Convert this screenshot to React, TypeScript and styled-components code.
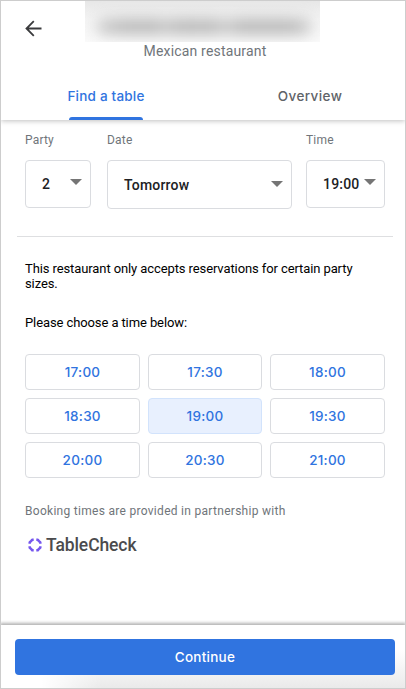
import React, { useState } from "react";
import styled, { createGlobalStyle } from "styled-components";

const GlobalStyle = createGlobalStyle`
  *, *::before, *::after { box-sizing: border-box; }
  body { margin: 0; background: #fff; font-family: Roboto, sans-serif; }
  button { font: inherit; padding: 0; cursor: pointer; }
`;

const Screen = styled.main`
  display: flex;
  flex-direction: column;
  width: 406px;
  height: 689px;
  border: 1px solid #cdcdcd;
  background: #fff;
  overflow: hidden;
`;

const Header = styled.header`
  position: relative;
  height: 119px;
  flex: none;
  display: flex;
  flex-direction: column;
  background: #fff;
  box-shadow: 0 1px 5px rgba(0, 0, 0, 0.25);
`;

const TitleRow = styled.div`
  display: flex;
  height: 40px;
`;

const BackButton = styled.button`
  display: flex;
  width: 84px;
  height: 40px;
  padding: 19px 0 0 24px;
  border: 0;
  background: none;
`;

const RedactedName = styled.div`
  width: 235px;
  height: 41px;
  overflow: hidden;
  background: linear-gradient(#e7e7e7, #f4f4f4 45%, #fafafa);
`;

const Smudge = styled.div`
  width: 216px;
  height: 17px;
  margin: 17px 0 0 11px;
  border-radius: 7px;
  background: linear-gradient(90deg, #d4d4d4, #bebebe 12%, #bcbcbc 27%, #cacaca 32%, #bcbcbc 38%, #bdbdbd 54%, #cecece 60%, #bcbcbc 67%, #bcbcbc 90%, #d4d4d4);
  filter: blur(7px);
`;

const Category = styled.div`
  height: 20px;
  padding-left: 4px;
  text-align: center;
  font-size: 14px;
  line-height: 20px;
  letter-spacing: 0.18px;
  color: #70757a;
`;

const Tabs = styled.nav`
  display: grid;
  grid-template-columns: 210px 198px;
  flex: 1;
`;

const Tab = styled.button<{ $active?: boolean }>`
  display: flex;
  flex-direction: column;
  align-items: center;
  justify-content: flex-end;
  border: 0;
  background: none;
  font-family: Inter, sans-serif;
  font-size: 13.5px;
  font-weight: 500;
  line-height: 18px;
  letter-spacing: ${(p) => (p.$active ? "0.2px" : "0.4px")};
  color: ${(p) => (p.$active ? "#3074e0" : "#5f6368")};

  &::after {
    content: "";
    width: 74px;
    height: 3px;
    margin-top: 12px;
    border-radius: 3px 3px 0 0;
    background: ${(p) => (p.$active ? "#3074e0" : "transparent")};
  }
`;

const Content = styled.section`
  flex: 1;
  padding: 11px 20px 0 24px;
`;

const Fields = styled.div`
  display: grid;
  grid-template-columns: 82px 199px 79px;
  width: 360px;
`;

const Field = styled.div`
  display: flex;
  flex-direction: column;
`;

const Label = styled.span`
  height: 18px;
  margin-bottom: 11px;
  font-size: 12px;
  line-height: 18px;
  letter-spacing: 0.2px;
  color: #70757a;
`;

const Select = styled.button<{ $width: number; $tall?: boolean }>`
  display: flex;
  align-items: center;
  justify-content: space-between;
  width: ${(p) => p.$width}px;
  height: ${(p) => (p.$tall ? 49 : 48)}px;
  padding: 0 8px 0 16px;
  border: 1px solid #dadce0;
  border-radius: 4px;
  background: #fff;
  font-size: 14px;
  font-weight: 500;
  letter-spacing: 0.2px;
  color: #202124;

  svg { margin-top: ${(p) => (p.$tall ? -2 : -5)}px; }
`;

const Divider = styled.hr`
  width: 376px;
  height: 1px;
  margin: 27px 0 0 -8px;
  border: 0;
  background: #dedfe1;
`;

const Notice = styled.p`
  width: 345px;
  margin: 24px 0 0;
  font-size: 13px;
  line-height: 15px;
  letter-spacing: -0.1px;
  color: #000;
`;

const Slots = styled.div`
  display: grid;
  grid-template-columns: 115px 114px 115px;
  grid-auto-rows: 36px;
  gap: 8px;
  margin-top: 24px;
`;

const Slot = styled.button<{ $selected: boolean }>`
  border: 1px solid ${(p) => (p.$selected ? "#d2e3fc" : "#dadce0")};
  border-radius: 4px;
  background: ${(p) => (p.$selected ? "#e8f0fe" : "#fff")};
  font-family: Inter, sans-serif;
  font-size: 13.5px;
  font-weight: 500;
  letter-spacing: 0.25px;
  color: #3074e0;
`;

const Partner = styled.p`
  margin: 25px 0 0;
  font-size: 12px;
  line-height: 16px;
  letter-spacing: 0.29px;
  color: #70757a;
`;

const Brand = styled.div`
  display: flex;
  align-items: center;
  gap: 4px;
  height: 20px;
  margin: 16px 0 0 3px;
`;

const BrandName = styled.span`
  font-family: Roboto, sans-serif;
  font-size: 17.5px;
  font-weight: 500;
  line-height: 20px;
  letter-spacing: -0.1px;
  color: #4b4b4d;
`;

const Footer = styled.footer`
  position: relative;
  flex: none;
  height: 63px;
  padding: 14px 10px 0 14px;
  background: linear-gradient(90deg, #fff 10%, rgba(255, 255, 255, 0) 25%), linear-gradient(#fff 40%, #eaeaea);
  box-shadow: 0 -1px 3px 1px rgba(0, 0, 0, 0.3);
`;

const Continue = styled.button`
  width: 380px;
  height: 36px;
  border: 0;
  border-radius: 4px;
  background: #3074e0;
  font-family: Inter, sans-serif;
  font-size: 13.5px;
  font-weight: 500;
  letter-spacing: 0.25px;
  color: #fff;
`;

const BackIcon = () => (
  <svg width="17" height="17" viewBox="0 0 17 17" fill="none" stroke="#3a3b3d" strokeWidth="1.8">
    <path d="M16.5 8.5H1.7M8.8 1.2 1.5 8.5l7.3 7.3" />
  </svg>
);

const Caret = () => (
  <svg width="12" height="6" viewBox="0 0 12 6" fill="#757575">
    <path d="M0 0h12L6 6z" />
  </svg>
);

const BrandMark = () => (
  <svg width="14" height="14" viewBox="0 0 14 14" fill="none" stroke="#7657ee" strokeWidth="2.5" strokeLinejoin="round">
    <path d="M1.7 5.7V4.2Q3.2 3.2 4.2 1.7H5.7M8.3 1.7h1.5Q10.8 3.2 12.3 4.2v1.5M12.3 8.3v1.5Q10.8 10.8 9.8 12.3H8.3M5.7 12.3H4.2Q3.2 10.8 1.7 9.8V8.3" />
  </svg>
);

const times = ["17:00", "17:30", "18:00", "18:30", "19:00", "19:30", "20:00", "20:30", "21:00"];

export default function App() {
  const [time, setTime] = useState("19:00");
  return (
    <>
      <GlobalStyle />
      <Screen>
        <Header>
          <TitleRow>
            <BackButton aria-label="Back"><BackIcon /></BackButton>
            <RedactedName><Smudge /></RedactedName>
          </TitleRow>
          <Category>Mexican restaurant</Category>
          <Tabs>
            <Tab $active>Find a table</Tab>
            <Tab>Overview</Tab>
          </Tabs>
        </Header>
        <Content>
          <Fields>
            <Field>
              <Label>Party</Label>
              <Select $width={66}>2<Caret /></Select>
            </Field>
            <Field>
              <Label>Date</Label>
              <Select $width={185} $tall>Tomorrow<Caret /></Select>
            </Field>
            <Field>
              <Label>Time</Label>
              <Select $width={79}>{time}<Caret /></Select>
            </Field>
          </Fields>
          <Divider />
          <Notice>This restaurant only accepts reservations for certain party sizes.</Notice>
          <Notice>Please choose a time below:</Notice>
          <Slots>
            {times.map((t) => (
              <Slot key={t} $selected={t === time} onClick={() => setTime(t)}>{t}</Slot>
            ))}
          </Slots>
          <Partner>Booking times are provided in partnership with</Partner>
          <Brand>
            <BrandMark />
            <BrandName>TableCheck</BrandName>
          </Brand>
        </Content>
        <Footer>
          <Continue>Continue</Continue>
        </Footer>
      </Screen>
    </>
  );
}
